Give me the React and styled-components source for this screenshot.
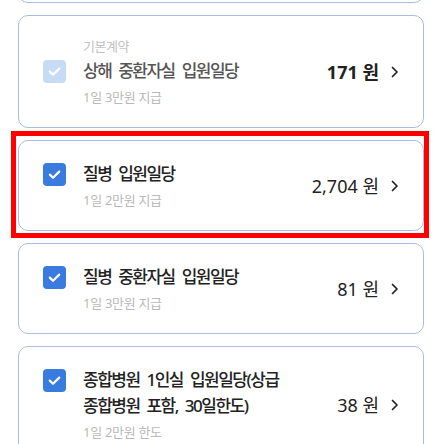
import React from 'react'
import styled, { createGlobalStyle } from 'styled-components'

const GlobalStyle = createGlobalStyle`
    html, body {
        margin: 0;
        padding: 0;
        background: #fff;
    }
    body {
        font-family: 'Noto Sans', 'Noto Sans CJK KR', sans-serif;
        color: #222;
    }
    * {
        box-sizing: border-box;
    }
`

const Page = styled.div`
    width: 444px;
    height: 444px;
    overflow: hidden;
    padding: 0 20px 0 18px;
`

// the list is scrolled: only the bottom edge of the first card shows
const List = styled.div`
    display: flex;
    flex-direction: column;
    gap: 12px;
    margin-top: -88px;
`

const CardFrame = styled.div`
    position: relative;
    border: 1px solid #a9bddd;
    border-radius: 10px;
    background: #fff;
`

const CardStub = styled(CardFrame)`
    height: 91px;
`

const Card = styled(CardFrame)`
    display: grid;
    grid-template-columns: 23px 1fr auto;
    grid-template-areas:
        '. label price'
        'check title price'
        '. sub price';
    column-gap: 17px;
    padding: 20px 24px;
`

const Highlight = styled.div`
    position: absolute;
    top: -10px;
    right: -6px;
    bottom: -8px;
    left: -8px;
    border: 5px solid #ff0000;
    pointer-events: none;
`

const CheckBox = styled.div`
    grid-area: check;
    align-self: start;
    margin-top: 2px;
    width: 23px;
    height: 23px;
    border-radius: 4px;
    background: ${p => (p.disabled ? '#c8dbf6' : '#3a7bdf')};
    display: flex;
    align-items: center;
    justify-content: center;
`

const Label = styled.div`
    grid-area: label;
    margin-bottom: 2px;
    font-size: 13px;
    line-height: 20px;
    letter-spacing: -0.5px;
    color: #c2c2c2;
`

const Title = styled.div`
    grid-area: title;
    font-size: 17px;
    font-weight: 500;
    line-height: 26px;
    letter-spacing: -1.5px;
    word-spacing: 4px;
    word-break: keep-all;
    color: ${p => (p.disabled ? '#555' : '#222')};
`

const Sub = styled.div`
    grid-area: sub;
    margin-top: 3px;
    font-size: 13px;
    line-height: 20px;
    letter-spacing: -0.3px;
    color: #b9b9b9;
`

const PriceBox = styled.div`
    grid-area: price;
    align-self: center;
    display: flex;
    align-items: center;
    gap: 12px;
`

const Price = styled.span`
    font-size: 18px;
    line-height: 26px;
    font-weight: ${p => (p.bold ? 700 : 400)};
    color: #222;
    white-space: nowrap;
`

const CheckIcon = () => (
    <svg width="23" height="23" viewBox="0 0 23 23">
        <polyline
            points="6.8,11.6 10,14.8 16.2,8.6"
            fill="none"
            stroke="#fff"
            strokeWidth="2.2"
            strokeLinecap="round"
            strokeLinejoin="round"
        />
    </svg>
)

const Chevron = () => (
    <svg width="8" height="12" viewBox="0 0 8 12">
        <polyline
            points="1.5,1.5 6,6 1.5,10.5"
            fill="none"
            stroke="#222"
            strokeWidth="1.7"
            strokeLinecap="round"
            strokeLinejoin="round"
        />
    </svg>
)

const items = [
    {
        id: 'basic',
        label: '기본계약',
        title: '상해 중환자실 입원일당',
        sub: '1일 3만원 지급',
        price: '171',
        disabled: true,
    },
    { id: 'sick', title: '질병 입원일당', sub: '1일 2만원 지급', price: '2,704', highlight: true },
    { id: 'sick-icu', title: '질병 중환자실 입원일당', sub: '1일 3만원 지급', price: '81' },
    {
        id: 'general',
        title: '종합병원 1인실 입원일당(상급 종합병원 포함, 30일한도)',
        sub: '1일 2만원 한도',
        price: '38',
    },
]

const CoverageCard = ({ item }) => (
    <Card>
        {item.label && <Label>{item.label}</Label>}
        <CheckBox disabled={item.disabled}>
            <CheckIcon />
        </CheckBox>
        <Title disabled={item.disabled}>{item.title}</Title>
        <Sub>{item.sub}</Sub>
        <PriceBox>
            <Price bold={item.disabled}>{`${item.price} 원`}</Price>
            <Chevron />
        </PriceBox>
        {item.highlight && <Highlight />}
    </Card>
)

export default function App() {
    return (
        <>
            <GlobalStyle />
            <Page>
                <List>
                    <CardStub />
                    {items.map(item => (
                        <CoverageCard key={item.id} item={item} />
                    ))}
                </List>
            </Page>
        </>
    )
}
